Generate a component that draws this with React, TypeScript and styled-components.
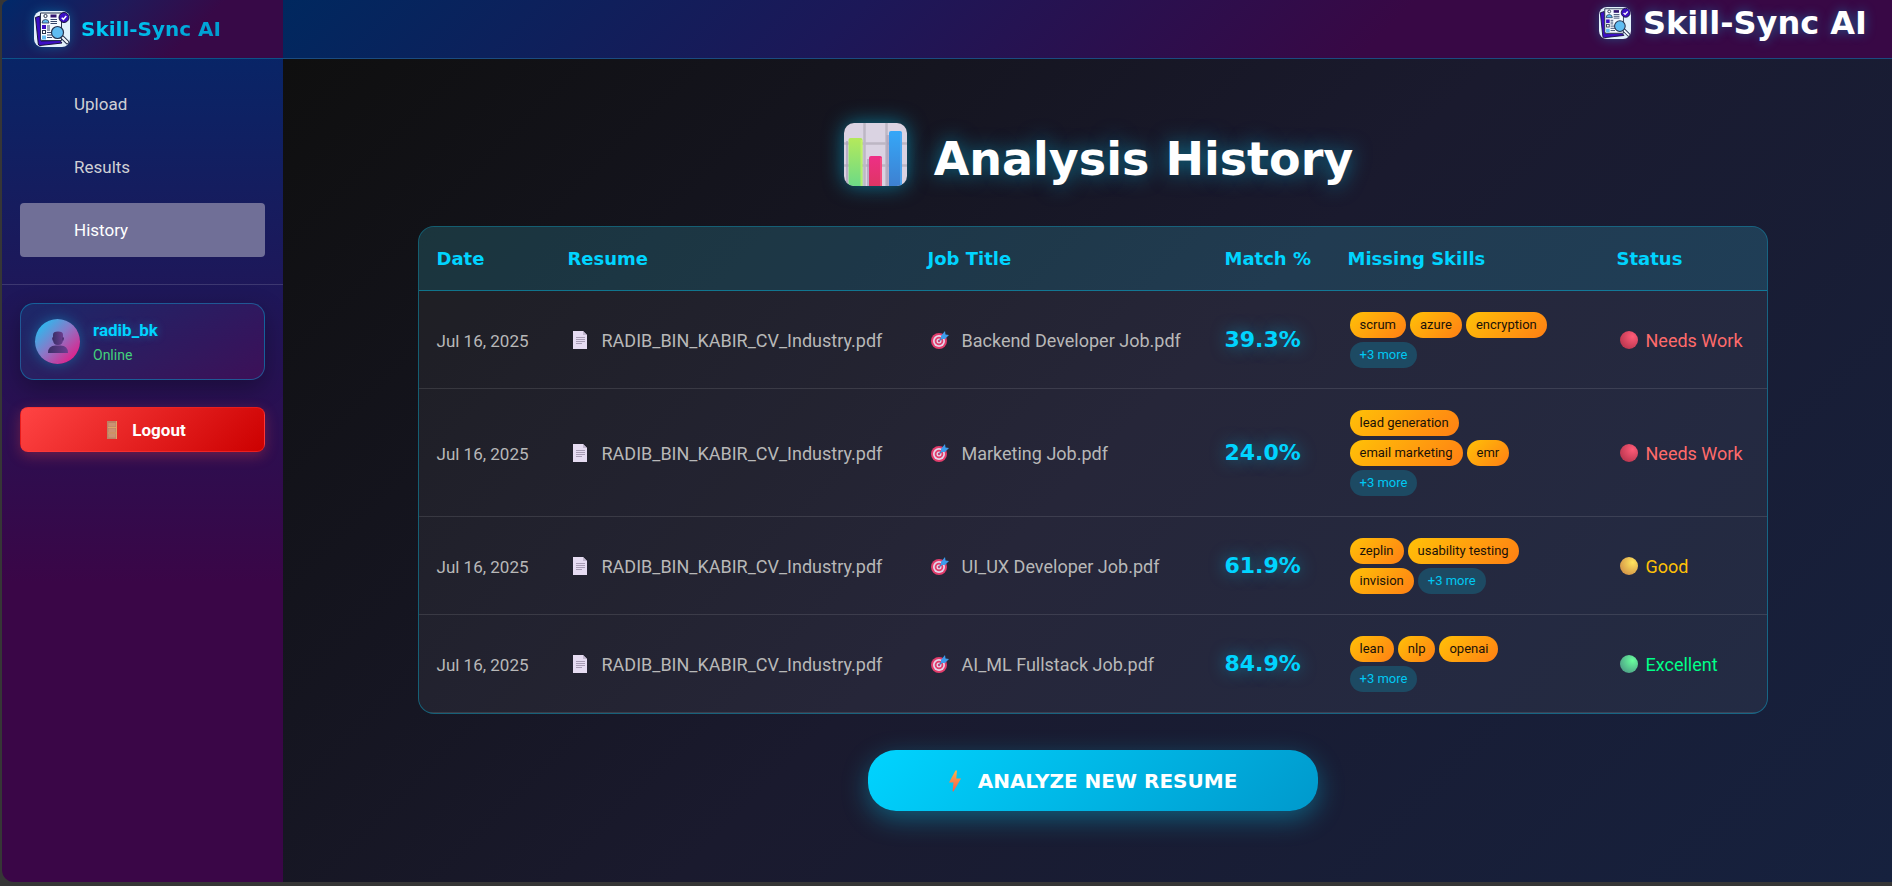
import React from 'react';
import styled, { createGlobalStyle } from 'styled-components';

const display = '"DejaVu Sans", Verdana, sans-serif';
const body = 'Roboto, "Liberation Sans", sans-serif';

const GlobalStyle = createGlobalStyle`
  *, *::before, *::after { box-sizing: border-box; }
  body {
    margin: 0;
    background: #363636;
    color: #b8b8b8;
    font-family: ${body};
    font-size: 18px;
  }
`;

const Frame = styled.div`
  min-height: 100vh;
  padding: 0 0 5px 2px;
  display: flex;
`;

const Shell = styled.div`
  flex: 1;
  display: flex;
  overflow: hidden;
  border-radius: 8px 0 0 12px;
`;

const Sidebar = styled.aside`
  width: 281px;
  flex: none;
  background: linear-gradient(180deg, #03286a 0%, #1e1759 33%, #3a0647 66%, #3a0647 100%);
`;

const Brand = styled.div`
  height: 59px;
  padding: 0 32px;
  display: flex;
  align-items: center;
  gap: 11px;
  border-bottom: 1px solid #0c5288;
  background: linear-gradient(135deg, #00296a 0%, #211958 38%, #370947 66%, #370947 100%);
`;

const BrandName = styled.span`
  font: 700 20px/24px ${display};
  white-space: nowrap;
  color: transparent;
  background: linear-gradient(135deg, #00d4ff, #0099cc);
  background-clip: text;
`;

const LogoSvg = styled.svg<{ $size: number }>`
  width: ${(p) => p.$size}px;
  height: ${(p) => p.$size}px;
  flex: none;
  border-radius: 8px;
  box-shadow: 0 0 12px rgba(0, 212, 255, 0.3);
`;

const Nav = styled.nav`
  padding: 18px;
  padding-bottom: 27px;
  display: flex;
  flex-direction: column;
  gap: 9px;
  border-bottom: 1px solid rgba(255, 255, 255, 0.14);
`;

const NavLink = styled.a<{ $active?: boolean }>`
  height: 54px;
  padding-left: 54px;
  display: flex;
  align-items: center;
  border-radius: 4px;
  font-size: 17px;
  text-decoration: none;
  color: ${(p) => (p.$active ? '#ffffff' : '#d0d0d4')};
  background: ${(p) => (p.$active ? '#706f97' : 'transparent')};
`;

const Account = styled.div`
  padding: 18px;
  display: flex;
  flex-direction: column;
  gap: 27px;
`;

const UserCard = styled.div`
  height: 77px;
  padding: 0 14px;
  display: flex;
  align-items: center;
  gap: 13px;
  border: 1px solid rgba(0, 212, 255, 0.35);
  border-radius: 14px;
  background: linear-gradient(135deg, rgba(0, 212, 255, 0.1), rgba(255, 0, 128, 0.1));
  box-shadow: 0 8px 24px rgba(0, 0, 0, 0.3);
`;

const Avatar = styled.div`
  width: 45px;
  height: 45px;
  display: grid;
  place-items: center;
  border-radius: 50%;
  background: linear-gradient(135deg, #1ac6f5 5%, #8a78c8 48%, #f0107f 95%);
  box-shadow: 0 0 14px rgba(0, 212, 255, 0.35);
`;

const UserName = styled.div`
  font-weight: 700;
  font-size: 17px;
  line-height: 26px;
  color: #00d4ff;
  text-shadow: 0 0 10px rgba(0, 212, 255, 0.4);
`;

const UserState = styled.div`
  font-size: 14px;
  line-height: 24px;
  color: #43d17c;
`;

const LogoutButton = styled.button`
  height: 45px;
  padding: 0 0 0 8px;
  display: flex;
  align-items: center;
  justify-content: center;
  gap: 15px;
  border: 1px solid rgba(255, 50, 50, 0.5);
  border-radius: 8px;
  background: linear-gradient(135deg, #ff4444, #cc0000);
  box-shadow: 0 4px 14px rgba(255, 68, 68, 0.3);
  color: #fff;
  font: 700 17px/20px ${body};
  cursor: pointer;
`;

const Page = styled.div`
  flex: 1;
  min-width: 0;
  display: flex;
  flex-direction: column;
`;

const TopBar = styled.header`
  height: 59px;
  padding: 0 25px 13px 0;
  display: flex;
  align-items: center;
  justify-content: flex-end;
  gap: 12px;
  border-bottom: 1px solid #1b4b80;
  background: linear-gradient(135deg, #00285f 0%, #1c1858 35%, #380845 68%, #380845 100%);
`;

const TopBrand = styled.span`
  font: 700 32px/38px ${display};
  white-space: nowrap;
  color: #fff;
  text-shadow: 0 0 12px rgba(0, 212, 255, 0.4);
`;

const Main = styled.main`
  flex: 1;
  padding: 62px 0 71px 10px;
  display: flex;
  flex-direction: column;
  align-items: center;
  background: linear-gradient(135deg, #0f0f0f 0%, #1a1a2e 50%, #16213e 100%);
`;

const Heading = styled.h1`
  margin: 0 0 37px;
  padding-left: 12px;
  display: flex;
  align-items: flex-start;
  gap: 27px;
  color: #fff;
  font: 700 46px/68px ${display};
  text-shadow: 0 0 20px rgba(0, 212, 255, 0.5);
`;

const HeadingText = styled.span`
  padding-top: 8px;
  line-height: 60px;
`;

const ChartSvg = styled.svg`
  margin-top: 2px;
  border-radius: 10px;
  box-shadow: 0 0 20px rgba(0, 212, 255, 0.5);
`;

const TableCard = styled.div`
  width: 100%;
  max-width: 1350px;
  overflow: hidden;
  border: 1px solid rgba(0, 212, 255, 0.35);
  border-radius: 16px;
  background: rgba(255, 255, 255, 0.055);
`;

const Table = styled.table`
  width: 100%;
  table-layout: fixed;
  border-collapse: separate;
  border-spacing: 0;
  text-align: left;
`;

const Column = styled.col<{ $width: number }>`
  width: ${(p) => p.$width}px;
`;

const HeadCell = styled.th`
  height: 64px;
  padding: 0 0 0 18px;
  border-bottom: 1px solid rgba(0, 212, 255, 0.4);
  background: rgba(0, 212, 255, 0.12);
  color: #00d4ff;
  font: 700 18px/24px ${display};
  white-space: nowrap;
`;

const Cell = styled.td`
  padding: 21px 0 20px 18px;
  border-bottom: 1px solid rgba(255, 255, 255, 0.11);
  white-space: nowrap;
`;

const DateText = styled.time`
  font-size: 17px;
`;

const IconLabel = styled.span<{ $tone?: string; $gap: number }>`
  display: flex;
  align-items: center;
  gap: ${(p) => p.$gap}px;
  padding-left: 3px;
  color: ${(p) => p.$tone ?? 'inherit'};
`;

const Score = styled.span`
  color: #00d4ff;
  font: 700 22px/28px ${display};
  text-shadow: 0 0 16px rgba(0, 212, 255, 0.5);
`;

const Tags = styled.div`
  max-width: 222px;
  padding-left: 2px;
  display: flex;
  flex-wrap: wrap;
  gap: 4px;
`;

const Tag = styled.span<{ $more?: boolean }>`
  height: 26px;
  padding: 0 10px;
  border-radius: 13px;
  font-size: 13px;
  line-height: 26px;
  color: ${(p) => (p.$more ? '#00c8f2' : '#1a1208')};
  background: ${(p) => (p.$more ? '#1d4a63' : 'linear-gradient(135deg, #ffc107, #ff7f14)')};
`;

const AnalyzeButton = styled.button`
  width: 450px;
  height: 61px;
  margin-top: 36px;
  padding: 0;
  display: flex;
  align-items: center;
  justify-content: center;
  gap: 16px;
  border: 0;
  border-radius: 28px;
  background: linear-gradient(135deg, #00d4ff, #0099cc);
  box-shadow: 0 8px 26px rgba(0, 212, 255, 0.35);
  color: #fff;
  font: 700 20px/24px ${display};
  cursor: pointer;
`;

const Logo = ({ size }: { size: number }) => (
  <LogoSvg $size={size} viewBox="0 0 36 36" aria-hidden="true">
    <rect width="36" height="36" fill="#e2f1fc" />
    <path d="M1.500 6.500L6 5L7 30L26 29.500L28 32L6 34.500Q4.500 34.500 4.300 33Z" fill="#3c0fc4" stroke="#17133d" />
    <path d="M6.500 2H27.500V29.500H8Q6.500 29.500 6.500 28Z" fill="#f5faff" stroke="#26334f" />
    <circle cx="11.500" cy="5" r="1.600" fill="#fff" stroke="#26334f" />
    <path d="M8 12Q8 8.500 11.500 8.500T15 12Z" fill="#62bdf0" stroke="#26334f" strokeWidth=".8" />
    <rect x="16.500" y="3.500" width="6" height="3" fill="#32156f" />
    <path d="M16.500 8.500H23M16.500 10.500H23M16.500 12.500H23M13 15H16M13 17H16M13 19H16M13 21.500H17M13 24H18M13 26.500H18" stroke="#35466b" />
    <rect x="8" y="14" width="4" height="4" fill="#3c0fc4" />
    <rect x="8.500" y="19.500" width="3" height="3" fill="#fff" stroke="#26334f" />
    <rect x="8" y="24.500" width="4" height="4" fill="#62bdf0" />
    <path d="M28 26L33.500 31.500" stroke="#26334f" strokeWidth="4" strokeLinecap="round" />
    <path d="M28.500 26.500L33.300 31.300" stroke="#f5faff" strokeWidth="2" strokeLinecap="round" />
    <circle cx="23.500" cy="21.500" r="6" fill="#5fbdf2" stroke="#26334f" strokeWidth="1.200" />
    <circle cx="30" cy="6.500" r="5" fill="#3c0fc4" stroke="#17133d" />
    <path d="M27.700 6.700L29.400 8.300L32.300 5" fill="none" stroke="#fff" strokeWidth="1.500" />
  </LogoSvg>
);

const PersonIcon = () => (
  <svg width="20" height="22" viewBox="0 0 20 22" aria-hidden="true">
    <defs>
      <linearGradient id="person" x1="0" y1="0" x2="1" y2="0">
        <stop offset="0" stopColor="#3b2f68" />
        <stop offset="1" stopColor="#6b3d8f" />
      </linearGradient>
    </defs>
    <path d="M0 22Q0 14.500 7.500 14.500H12.500Q20 14.500 20 22Z" fill="url(#person)" />
    <path d="M5 3.500Q5 .5 10 .5T15 3.500V9Q15 14 10 14T5 9Z" fill="url(#person)" />
    <path d="M4 6.500H5.500V9.500H4.500ZM16 6.500H14.500V9.500H15.500Z" fill="#402b68" />
  </svg>
);

const DoorIcon = () => (
  <svg width="10" height="18" viewBox="0 0 10 18" aria-hidden="true">
    <rect width="10" height="18" fill="#bb8265" />
    <path d="M1.500 2H8.500V5.500H1.500ZM1.500 7.500H8.500V11H1.500ZM1.500 13H8.500V16.500H1.500Z" fill="#cb9373" />
    <path d="M1 6.500H9M1 12H9M9.500 0V18" stroke="#dda568" />
  </svg>
);

const BarChartIcon = () => (
  <ChartSvg width="63" height="63" viewBox="0 0 63 63" aria-hidden="true">
    <defs>
      <linearGradient id="barGreen" x1="0" y1="0" x2="0" y2="1">
        <stop offset="0" stopColor="#b4e95b" />
        <stop offset="1" stopColor="#66d98a" />
      </linearGradient>
      <linearGradient id="barPink" x1="0" y1="0" x2="0" y2="1">
        <stop offset="0" stopColor="#ee2f86" />
        <stop offset="1" stopColor="#dc3660" />
      </linearGradient>
      <linearGradient id="barBlue" x1="0" y1="0" x2="0" y2="1">
        <stop offset="0" stopColor="#35a7f8" />
        <stop offset="1" stopColor="#3f7dcd" />
      </linearGradient>
    </defs>
    <rect width="63" height="63" fill="#dad3e2" />
    <path d="M20.500 0V63M42.500 0V63M0 20.500H63M0 42.500H63" stroke="#bdb7c4" strokeWidth="2.500" />
    <path d="M2 18H4V63H2ZM23 36H25V63H23ZM42.500 12H45V63H42.500Z" fill="#a99fba" opacity=".7" />
    <rect x="4.500" y="15" width="14" height="52" rx="2" fill="url(#barGreen)" />
    <rect x="25" y="33" width="13" height="34" rx="2" fill="url(#barPink)" />
    <rect x="45" y="8" width="13" height="60" rx="2" fill="url(#barBlue)" />
    <path d="M17.500 17V63" stroke="#cdf56a" strokeWidth="2" opacity=".7" />
    <path d="M37 35V63" stroke="#fb5a86" strokeWidth="2" opacity=".7" />
    <path d="M57 10V63" stroke="#55aef5" strokeWidth="2" opacity=".7" />
  </ChartSvg>
);

const FileIcon = () => (
  <svg width="17" height="18" viewBox="0 0 17 18" aria-hidden="true">
    <path d="M2 0H12L16 4V18H2Z" fill="#e6dcf2" />
    <path d="M12 0V4H16Z" fill="#c3b8d0" />
    <path d="M5 6.500H14M5 8.500H14M5 10.500H14M5 12.500H11" stroke="#a89db5" />
  </svg>
);

const TargetIcon = () => (
  <svg width="18" height="18" viewBox="0 0 18 18" aria-hidden="true">
    <circle cx="8" cy="10" r="8" fill="#e23d6c" />
    <circle cx="8" cy="10" r="6" fill="#e4d6ea" />
    <circle cx="8" cy="10" r="4.300" fill="#e23d6c" />
    <circle cx="8" cy="10" r="2.500" fill="#e4d6ea" />
    <circle cx="8" cy="10" r="1.200" fill="#c94474" />
    <path d="M8.500 9.500L13 5" stroke="#3b7fc0" strokeWidth="1.500" />
    <path d="M10 5L14 0L14.500 3.500L18 4L14 8H10Z" fill="#3d9cec" />
  </svg>
);

const dots: Record<string, [string, string]> = {
  red: ['#ff5c78', '#b9354e'],
  yellow: ['#ffe55e', '#d39347'],
  green: ['#69ff9e', '#4d9f86'],
};

const DotIcon = ({ hue }: { hue: string }) => (
  <svg width="18" height="18" viewBox="0 0 18 18" aria-hidden="true">
    <defs>
      <radialGradient id={`dot-${hue}`} cx=".7" cy=".3" r=".8">
        <stop offset="0" stopColor={dots[hue][0]} />
        <stop offset="1" stopColor={dots[hue][1]} />
      </radialGradient>
    </defs>
    <circle cx="9" cy="9" r="9" fill={`url(#dot-${hue})`} />
  </svg>
);

const BoltIcon = () => (
  <svg width="14" height="22" viewBox="0 0 14 22" aria-hidden="true">
    <defs>
      <linearGradient id="bolt" x1="0" y1="0" x2="0" y2="1">
        <stop offset="0" stopColor="#fdb34a" />
        <stop offset="1" stopColor="#f5584c" />
      </linearGradient>
    </defs>
    <path d="M7.500 .5L9 .5L8.300 8.500H13L5.500 21.500L4.500 21.200L5.500 12.500H1Z" fill="url(#bolt)" />
  </svg>
);

const statuses = {
  work: { label: 'Needs Work', hue: 'red', tone: '#ff6b6b' },
  good: { label: 'Good', hue: 'yellow', tone: '#ffc107' },
  excellent: { label: 'Excellent', hue: 'green', tone: '#00ff88' },
};

type Entry = {
  job: string;
  match: string;
  skills: string[];
  status: keyof typeof statuses;
};

const entries: Entry[] = [
  { job: 'Backend Developer Job.pdf', match: '39.3%', skills: ['scrum', 'azure', 'encryption'], status: 'work' },
  { job: 'Marketing Job.pdf', match: '24.0%', skills: ['lead generation', 'email marketing', 'emr'], status: 'work' },
  { job: 'UI_UX Developer Job.pdf', match: '61.9%', skills: ['zeplin', 'usability testing', 'invision'], status: 'good' },
  { job: 'AI_ML Fullstack Job.pdf', match: '84.9%', skills: ['lean', 'nlp', 'openai'], status: 'excellent' },
];

const columns: [string, number][] = [
  ['Date', 131],
  ['Resume', 360],
  ['Job Title', 297],
  ['Match %', 123],
  ['Missing Skills', 269],
  ['Status', 168],
];

export default function App() {
  return (
    <Frame>
      <GlobalStyle />
      <Shell>
        <Sidebar>
          <Brand>
            <Logo size={36} />
            <BrandName>Skill-Sync AI</BrandName>
          </Brand>
          <Nav>
            <NavLink href="#upload">Upload</NavLink>
            <NavLink href="#results">Results</NavLink>
            <NavLink href="#history" $active aria-current="page">
              History
            </NavLink>
          </Nav>
          <Account>
            <UserCard>
              <Avatar>
                <PersonIcon />
              </Avatar>
              <div>
                <UserName>radib_bk</UserName>
                <UserState>Online</UserState>
              </div>
            </UserCard>
            <LogoutButton type="button">
              <DoorIcon />
              Logout
            </LogoutButton>
          </Account>
        </Sidebar>
        <Page>
          <TopBar>
            <Logo size={32} />
            <TopBrand>Skill-Sync AI</TopBrand>
          </TopBar>
          <Main>
            <Heading>
              <BarChartIcon />
              <HeadingText>Analysis History</HeadingText>
            </Heading>
            <TableCard>
              <Table>
                <colgroup>
                  {columns.map(([name, width]) => (
                    <Column key={name} $width={width} />
                  ))}
                </colgroup>
                <thead>
                  <tr>
                    {columns.map(([name]) => (
                      <HeadCell key={name} scope="col">
                        {name}
                      </HeadCell>
                    ))}
                  </tr>
                </thead>
                <tbody>
                  {entries.map((entry) => {
                    const status = statuses[entry.status];
                    return (
                      <tr key={entry.job}>
                        <Cell>
                          <DateText dateTime="2025-07-16">Jul 16, 2025</DateText>
                        </Cell>
                        <Cell>
                          <IconLabel $gap={14}>
                            <FileIcon />
                            RADIB_BIN_KABIR_CV_Industry.pdf
                          </IconLabel>
                        </Cell>
                        <Cell>
                          <IconLabel $gap={13}>
                            <TargetIcon />
                            {entry.job}
                          </IconLabel>
                        </Cell>
                        <Cell>
                          <Score>{entry.match}</Score>
                        </Cell>
                        <Cell>
                          <Tags>
                            {entry.skills.map((skill) => (
                              <Tag key={skill}>{skill}</Tag>
                            ))}
                            <Tag $more>+3 more</Tag>
                          </Tags>
                        </Cell>
                        <Cell>
                          <IconLabel $gap={8} $tone={status.tone}>
                            <DotIcon hue={status.hue} />
                            {status.label}
                          </IconLabel>
                        </Cell>
                      </tr>
                    );
                  })}
                </tbody>
              </Table>
            </TableCard>
            <AnalyzeButton type="button">
              <BoltIcon />
              ANALYZE NEW RESUME
            </AnalyzeButton>
          </Main>
        </Page>
      </Shell>
    </Frame>
  );
}
